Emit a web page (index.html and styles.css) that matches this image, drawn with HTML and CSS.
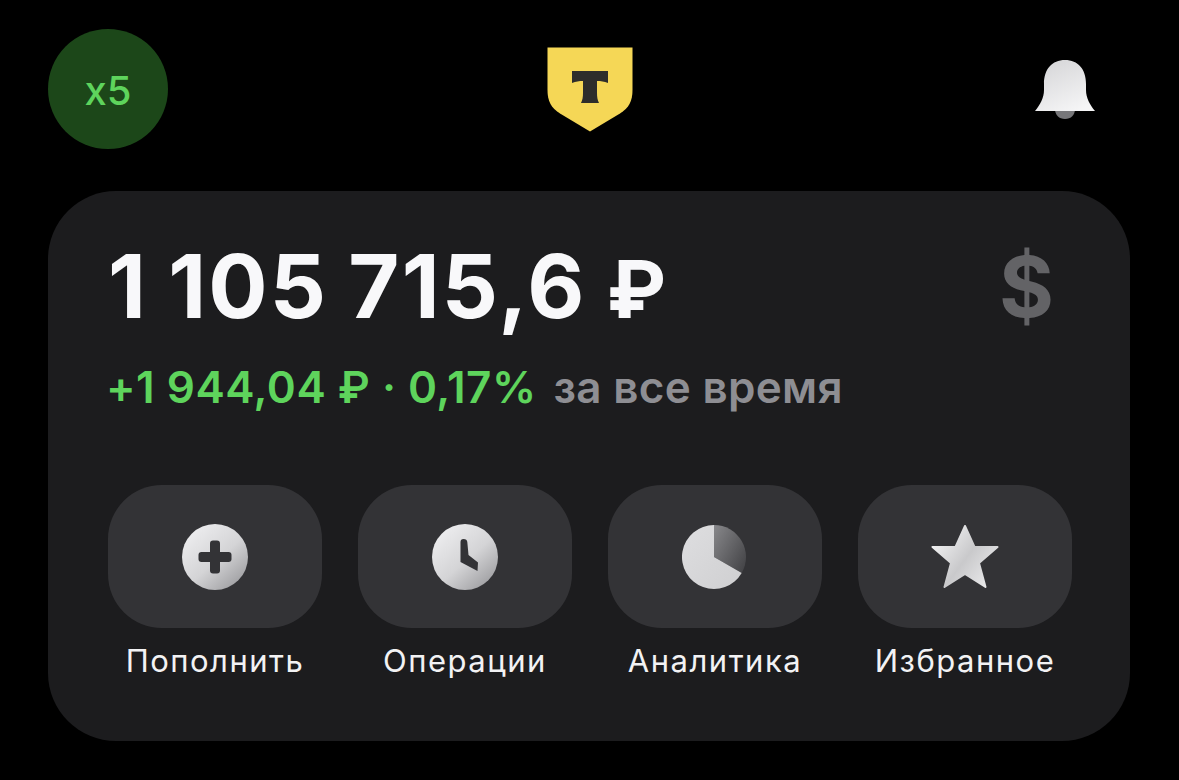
FILE: index.html
```html
<!DOCTYPE html>
<html lang="ru">
<head>
<meta charset="utf-8">
<title>Инвестиции</title>
<link rel="stylesheet" href="styles.css">
</head>
<body>
<header class="top">
  <div class="badge">x5</div>
  <svg class="logo" width="86" height="85" viewBox="0 0 86 85">
    <path d="M0.500 0.500H85.500V43C85.500 54 82 61 73 66.500L43 84.500L13 66.500C4 61 0.500 54 0.500 43Z" fill="#f5d756"/>
    <path d="M25 24H61V36C57 34.500 54 34 50 34V46C50 50 50.500 53 52 56H34C35.500 53 36 50 36 46V34C32 34 29 34.500 25 36Z" fill="#2d2d2b"/>
  </svg>
  <svg class="bell" width="60" height="60" viewBox="0 0 60 60">
    <defs>
      <linearGradient id="bellg" x1="0.200" y1="0" x2="0.700" y2="1">
        <stop offset="0" stop-color="#d6d6d8"/><stop offset="1" stop-color="#f5f5f6"/>
      </linearGradient>
    </defs>
    <path d="M20 49H40C40 55 36 59 30 59C24 59 20 55 20 49Z" fill="#77777a"/>
    <path d="M30 0C43 0 51 9 51 24V30C51 38 55 45 60 51H0C5 45 9 38 9 30V24C9 9 17 0 30 0Z" fill="url(#bellg)"/>
  </svg>
</header>
<main class="card">
  <div class="balance-row">
    <div class="balance">1 105 715,6 <span class="rub">₽</span></div>
    <div class="currency">$</div>
  </div>
  <div class="profit"><span class="gain">+1 944,04 ₽ · 0,17%</span><span class="period">за все время</span></div>
  <nav class="actions">
    <div class="action">
      <div class="tile">
        <svg width="66" height="66" viewBox="0 0 66 66">
          <defs>
            <linearGradient id="metal" x1="0.150" y1="0.100" x2="0.850" y2="0.900">
              <stop offset="0" stop-color="#ececee"/><stop offset="0.550" stop-color="#d4d4d6"/><stop offset="1" stop-color="#a2a2a5"/>
            </linearGradient>
          </defs>
          <circle cx="33" cy="33" r="33" fill="url(#metal)"/>
          <rect x="28" y="16.500" width="10" height="33" rx="3" fill="#333336"/>
          <rect x="16.500" y="28" width="33" height="10" rx="3" fill="#333336"/>
        </svg>
      </div>
      <span class="label">Пополнить</span>
    </div>
    <div class="action">
      <div class="tile">
        <svg width="66" height="66" viewBox="0 0 66 66">
          <circle cx="33" cy="33" r="33" fill="url(#metal)"/>
          <path d="M28.500 18Q28.500 15 31.500 15Q35 15 35.300 18L36.500 31L46 38.500L45.500 47L28.500 38Z" fill="#333336"/>
        </svg>
      </div>
      <span class="label">Операции</span>
    </div>
    <div class="action">
      <div class="tile">
        <svg class="pie" width="64" height="64" viewBox="0 0 64 64">
          <defs>
            <linearGradient id="pielight" x1="0" y1="0" x2="1" y2="1">
              <stop offset="0" stop-color="#dedee0"/><stop offset="1" stop-color="#cfcfd1"/>
            </linearGradient>
            <linearGradient id="piedark" x1="0" y1="0" x2="1" y2="0.800">
              <stop offset="0" stop-color="#88888b"/><stop offset="1" stop-color="#464649"/>
            </linearGradient>
          </defs>
          <path d="M32 0A32 32 0 0 1 59.700 48L32 32Z" fill="url(#piedark)"/>
          <path d="M32 0V32L59.700 48A32 32 0 1 1 32 0Z" fill="url(#pielight)"/>
        </svg>
      </div>
      <span class="label">Аналитика</span>
    </div>
    <div class="action">
      <div class="tile">
        <svg width="68" height="64" viewBox="0 0 68 64">
          <defs>
            <linearGradient id="starg" x1="0" y1="0.200" x2="1" y2="0.900">
              <stop offset="0" stop-color="#f4f4f5"/><stop offset="0.500" stop-color="#c9c9cb"/><stop offset="1" stop-color="#eeeeef"/>
            </linearGradient>
          </defs>
          <path d="M34 1L43.500 22H66.500L48 38L54.500 62L34 49L13.500 62L20 38L1.500 22H24.500Z" fill="url(#starg)" stroke="url(#starg)" stroke-width="2" stroke-linejoin="round"/>
        </svg>
      </div>
      <span class="label">Избранное</span>
    </div>
  </nav>
</main>
</body>
</html>
```
FILE: styles.css
```css
* { box-sizing: border-box; }
html, body { margin: 0; padding: 0; }
body {
  width: 1179px;
  height: 780px;
  overflow: hidden;
  background: #000;
  font-family: Inter, "Liberation Sans", sans-serif;
  padding: 29px 49px 0 48px;
}
.top {
  display: grid;
  grid-template-columns: 499px 86px 1fr;
  align-items: start;
  height: 162px;
  padding-right: 35px;
}
.badge {
  width: 120px;
  height: 120px;
  border-radius: 50%;
  background: #1c4719;
  color: #5ed45c;
  font-size: 40px;
  font-weight: 500;
  display: flex;
  align-items: center;
  justify-content: center;
  padding-top: 2px;
}
.logo { margin-top: 18px; }
.bell { margin-top: 31px; justify-self: end; }
.card {
  width: 1082px;
  height: 550px;
  border-radius: 68px;
  background: #1c1c1e;
  padding: 50px 60px 0;
}
.balance-row {
  display: flex;
  justify-content: space-between;
  align-items: center;
  height: 90px;
  padding-right: 16px;
}
.balance {
  color: #f8f8fa;
  font-size: 88px;
  font-weight: 700;
  letter-spacing: 2.200px;
  word-spacing: -3px;
  white-space: nowrap;
}
.rub { font-size: 80px; letter-spacing: 0; }
.currency {
  color: #636366;
  font-size: 84px;
  font-weight: 700;
}
.profit {
  display: flex;
  gap: 17px;
  margin-top: 31px;
  margin-left: -2px;
  font-size: 44px;
  font-weight: 600;
  line-height: 50px;
  white-space: nowrap;
}
.gain { color: #5ed45c; letter-spacing: 0.500px; }
.period { color: #8e8e93; letter-spacing: 0.300px; }
.actions {
  display: grid;
  grid-template-columns: repeat(4, 214px);
  column-gap: 36px;
  margin-top: 73px;
}
.action {
  display: flex;
  flex-direction: column;
  align-items: center;
  gap: 15px;
}
.tile {
  width: 214px;
  height: 143px;
  border-radius: 54px;
  background: #333336;
  display: flex;
  align-items: center;
  justify-content: center;
}
.pie { margin-right: 2px; }
.label {
  color: #f2f2f4;
  font-size: 31px;
  font-weight: 400;
  letter-spacing: 1.500px;
  line-height: 36px;
  white-space: nowrap;
}
```
